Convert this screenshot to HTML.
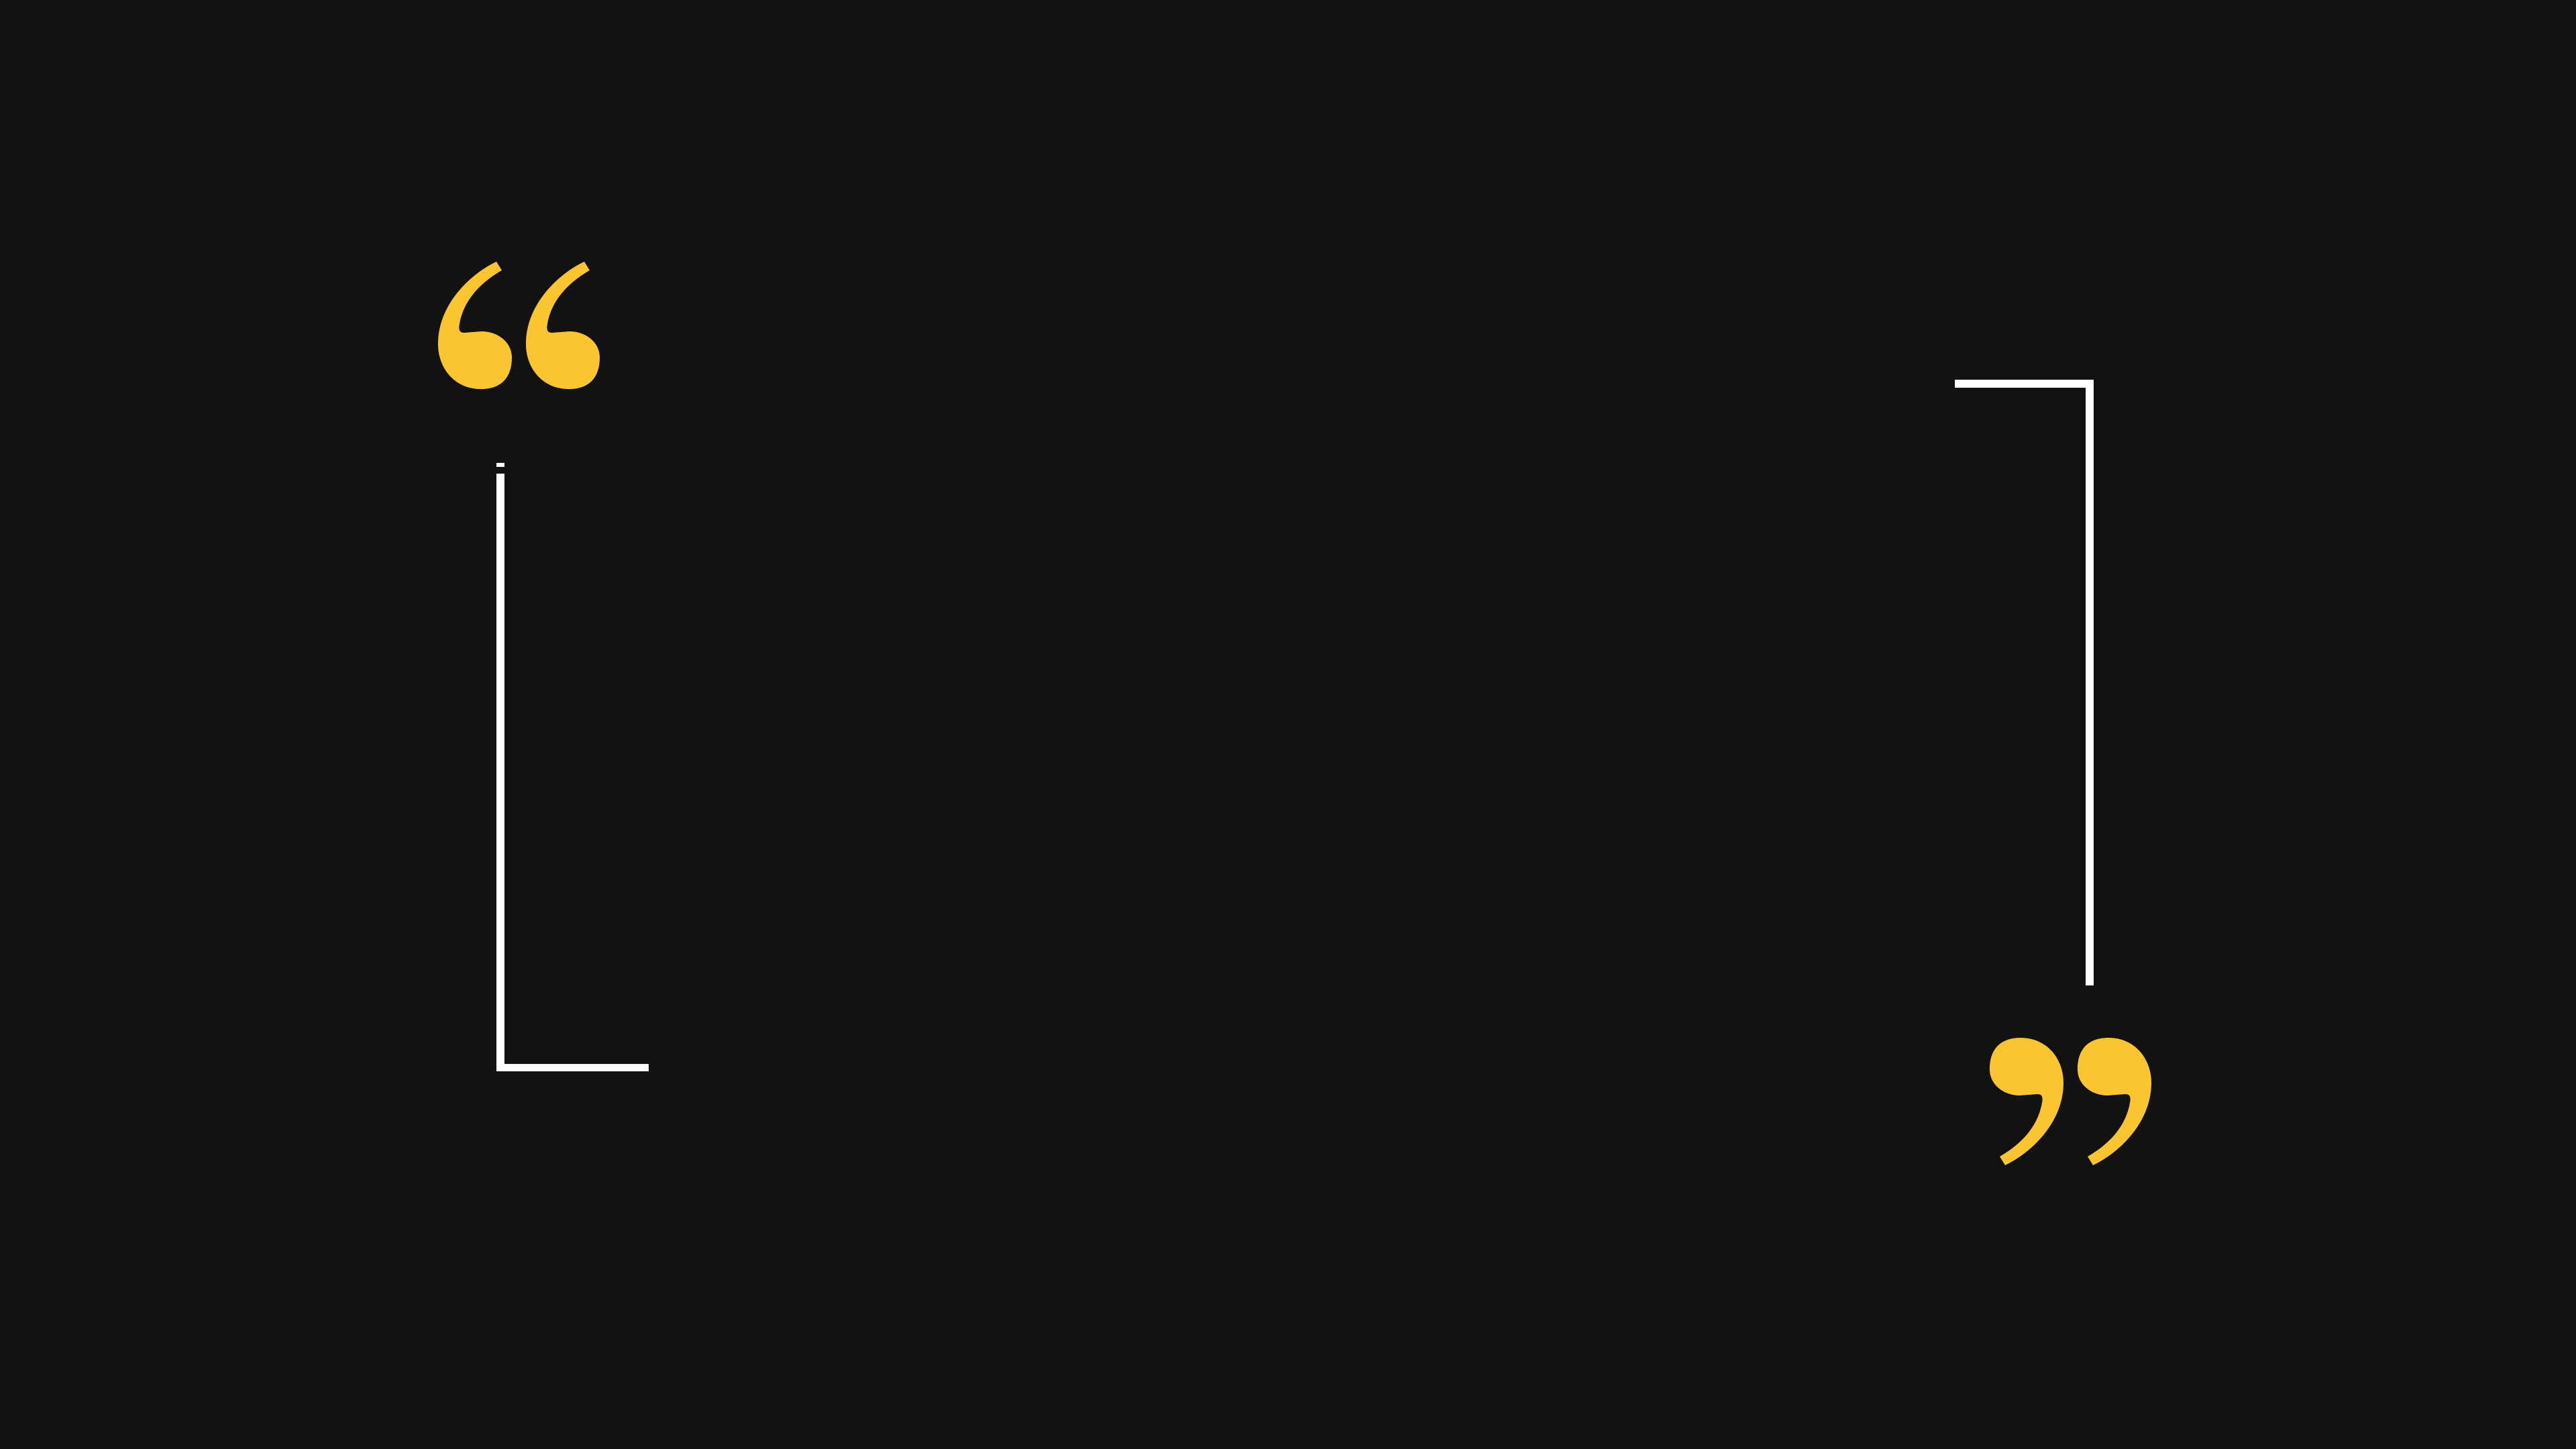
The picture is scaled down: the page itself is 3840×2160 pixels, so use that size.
<!DOCTYPE html>
<html><head><style>html,body{margin:0;padding:0;background:#121212;width:3840px;height:2160px;overflow:hidden}</style></head>
<body>
<svg width="3840" height="2160" viewBox="0 0 3840 2160" xmlns="http://www.w3.org/2000/svg" style="position:absolute;left:0;top:0">
<rect width="3840" height="2160" fill="#121212"/>
<defs>
<path id="q" d="M88,2 L96,15 C70,30 40,55 33,95 C31,105 34,108 40,108 L66,106 C90,106 111,122 111,145 C111,175 95,192 65,192 C25,192 1,160 1,125 C1,65 50,20 88,2 Z" fill="#fbc531"/>
</defs>
<g transform="translate(652,388)"><use href="#q"/><use href="#q" x="131"/></g>
<g transform="translate(3208,1739) rotate(180)"><use href="#q"/><use href="#q" x="131"/></g>
<g fill="#ffffff">
<rect x="740" y="690" width="12" height="6"/>
<rect x="740" y="706" width="12" height="891"/>
<rect x="740" y="1586" width="227" height="11"/>
<rect x="2914" y="566" width="207" height="12"/>
<rect x="3109" y="566" width="12" height="903"/>
</g>
</svg>
</body></html>
